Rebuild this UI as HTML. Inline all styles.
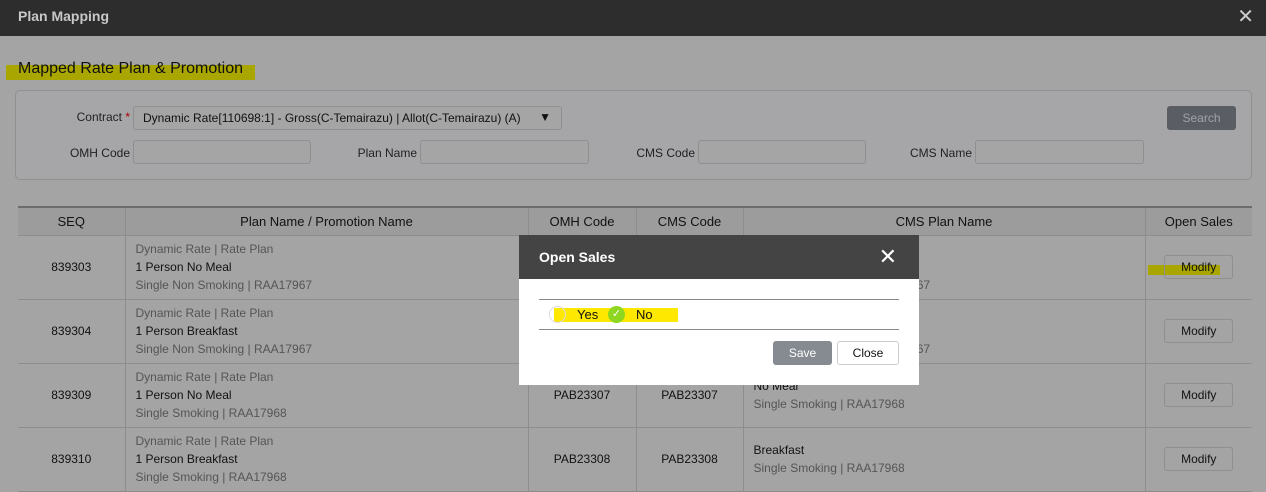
<!DOCTYPE html>
<html><head><style>
*{box-sizing:border-box;margin:0;padding:0}
body{width:1266px;height:471px;overflow:hidden;background:#a4a4a4;font-family:"Liberation Sans",sans-serif;font-size:12px;color:#111;position:relative}
.top{position:absolute;left:0;top:0;width:1266px;height:36px;background:#2d2d2d;color:#c8c8c8;font-size:14px;font-weight:bold;padding:8px 18px}
.top .x{position:absolute;right:12px;top:4px;font-size:20px;font-weight:normal;color:#ccc}
.h1{position:absolute;left:6px;top:60px;font-size:16px;color:#111;padding:0 12px;height:20px;background:linear-gradient(#a4a4a4 0,#a4a4a4 5px,#a9a600 5px)}
.box{position:absolute;left:15px;top:90px;width:1237px;height:90px;border:1px solid #909090;border-radius:5px;background:#a6a5a8}
.lbl{position:absolute;font-size:12px;color:#222;text-align:right}
.inp{position:absolute;height:24px;border:1px solid #8f8f8f;border-radius:3px;background:#a5a5a5;font-size:12px;padding:4px 9px;color:#111}
.btn{position:absolute;left:1167px;top:106px;width:69px;height:24px;background:#5a5d63;border-radius:3px;color:#a0a3a8;text-align:center;line-height:24px}
table{position:absolute;left:18px;top:206px;width:1234px;border-collapse:collapse}
th{height:28px;background:#9c9c9c;font-weight:normal;font-size:13px;border-left:1px solid #8d8d8d;border-top:2px solid #6c6c6c;border-bottom:1px solid #8d8d8d}
td{height:64px;border-left:1px solid #8d8d8d;border-bottom:1px solid #8d8d8d;text-align:center;font-size:12px;vertical-align:middle}
th:first-child,td:first-child{border-left:none}
td.p{text-align:left;padding-left:10px;line-height:18px}
.g{color:#555}
.mod{display:inline-block;width:69px;height:24px;border:1px solid #8f8f8f;border-radius:3px;line-height:22px;font-size:12px;color:#111}
.modal{position:absolute;left:519px;top:235px;width:400px;height:150px;background:#fff}
.mh{height:44px;background:#444;color:#fff;font-weight:bold;font-size:14px;padding:14px 20px}
.mh .x{position:absolute;right:22px;top:9px;font-size:22px;font-weight:normal}
</style></head><body>
<div class="top">Plan Mapping<span class="x">✕</span></div>
<div class="h1"><span>Mapped Rate Plan &amp; Promotion</span></div>
<div class="box"></div>
<div class="lbl" style="left:60px;top:110px;width:70px">Contract <span style="color:#a00">*</span></div>
<div class="inp" style="left:133px;top:106px;width:429px">Dynamic Rate[110698:1] - Gross(C-Temairazu) | Allot(C-Temairazu) (A)<span style="position:absolute;right:10px;top:3px">▼</span></div>
<div class="lbl" style="left:50px;top:146px;width:80px">OMH Code</div>
<div class="inp" style="left:133px;top:140px;width:178px"></div>
<div class="lbl" style="left:330px;top:146px;width:87px">Plan Name</div>
<div class="inp" style="left:420px;top:140px;width:169px"></div>
<div class="lbl" style="left:610px;top:146px;width:85px">CMS Code</div>
<div class="inp" style="left:698px;top:140px;width:168px"></div>
<div class="lbl" style="left:890px;top:146px;width:82px">CMS Name</div>
<div class="inp" style="left:975px;top:140px;width:169px"></div>
<div class="btn">Search</div>
<div style="position:absolute;left:1148px;top:265px;width:72px;height:10px;background:#a9a600"></div>
<table>
<tr><th style="width:107px">SEQ</th><th style="width:403px">Plan Name / Promotion Name</th><th style="width:108px">OMH Code</th><th style="width:107px">CMS Code</th><th style="width:402px">CMS Plan Name</th><th>Open Sales</th></tr>
<tr><td>839303</td><td class="p"><span class="g">Dynamic Rate | Rate Plan</span><br>1 Person No Meal<br><span class="g">Single Non Smoking | RAA17967</span></td><td></td><td></td><td class="p"><br><br><span class="g">Single Non Smoking | RAA17967</span></td><td><span class="mod">Modify</span></td></tr>
<tr><td>839304</td><td class="p"><span class="g">Dynamic Rate | Rate Plan</span><br>1 Person Breakfast<br><span class="g">Single Non Smoking | RAA17967</span></td><td></td><td></td><td class="p"><br><br><span class="g">Single Non Smoking | RAA17967</span></td><td><span class="mod">Modify</span></td></tr>
<tr><td>839309</td><td class="p"><span class="g">Dynamic Rate | Rate Plan</span><br>1 Person No Meal<br><span class="g">Single Smoking | RAA17968</span></td><td>PAB23307</td><td>PAB23307</td><td class="p">No Meal<br><span class="g">Single Smoking | RAA17968</span></td><td><span class="mod">Modify</span></td></tr>
<tr><td>839310</td><td class="p"><span class="g">Dynamic Rate | Rate Plan</span><br>1 Person Breakfast<br><span class="g">Single Smoking | RAA17968</span></td><td>PAB23308</td><td>PAB23308</td><td class="p">Breakfast<br><span class="g">Single Smoking | RAA17968</span></td><td><span class="mod">Modify</span></td></tr>
</table>
<div class="modal">
<div class="mh">Open Sales<span class="x">✕</span></div>
<div style="position:absolute;left:20px;top:64px;width:360px;border-top:1px solid #888"></div>
<div style="position:absolute;left:35px;top:73px;width:124px;height:14px;background:#ffe800"></div>
<div style="position:absolute;left:30px;top:71px;width:17px;height:17px;border:1px solid #ddd;border-radius:50%"></div>
<div style="position:absolute;left:58px;top:72px;font-size:13px">Yes</div>
<div style="position:absolute;left:89px;top:71px;width:17px;height:17px;border-radius:50%;background:#8fd620;color:#fff;font-size:11px;text-align:center;line-height:17px">✓</div>
<div style="position:absolute;left:117px;top:72px;font-size:13px">No</div>
<div style="position:absolute;left:20px;top:94px;width:360px;border-top:1px solid #888"></div>
<div style="position:absolute;left:254px;top:106px;width:59px;height:24px;background:#868b92;border-radius:3px;color:#fff;text-align:center;line-height:24px">Save</div>
<div style="position:absolute;left:318px;top:106px;width:62px;height:24px;border:1px solid #ccc;border-radius:3px;text-align:center;line-height:22px">Close</div>
</div>
</body></html>
